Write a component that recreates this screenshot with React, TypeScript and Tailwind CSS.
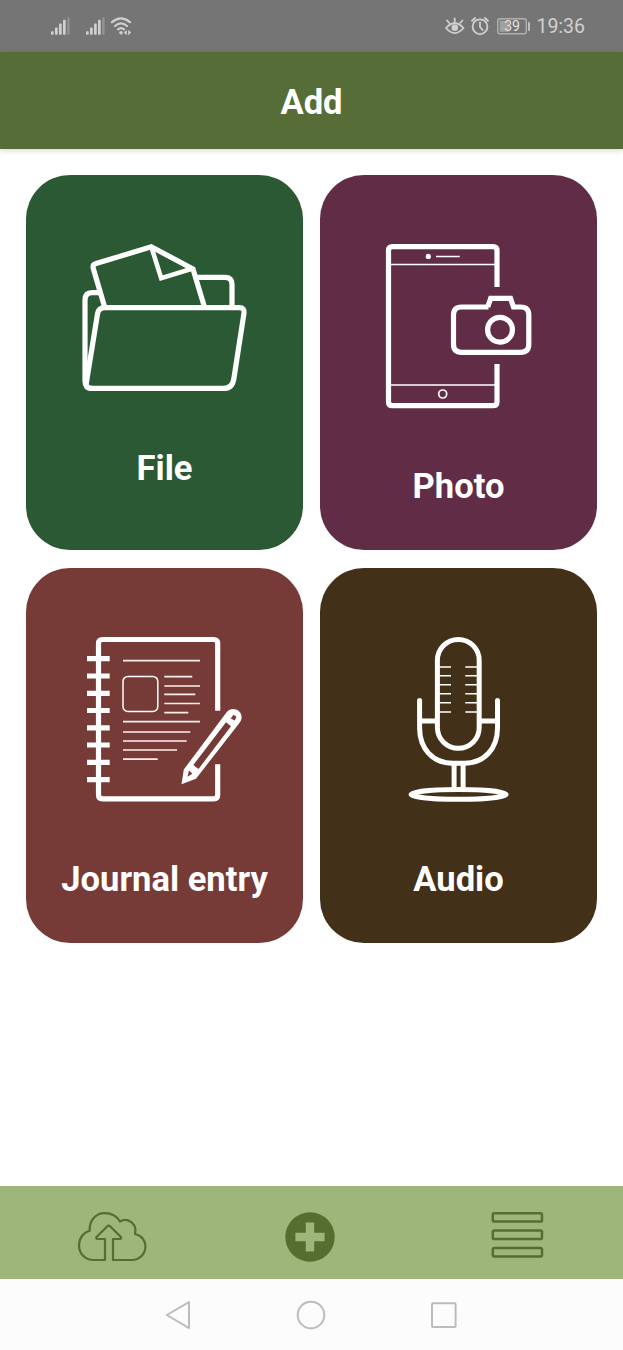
import type { ReactNode } from "react";

function Signal() {
  return (
    <svg className="h-5 w-5" viewBox="0 0 20 20" fill="#d0d0d0">
      <rect x="1" y="15.3" width="2.7" height="3.4" rx="0.8" />
      <rect x="5" y="11.5" width="2.7" height="7.2" rx="0.8" />
      <rect x="9" y="7.5" width="2.7" height="11.2" rx="0.8" />
      <rect x="13" y="3.8" width="2.7" height="14.9" rx="0.8" />
      <rect x="17.3" y="1.3" width="2.3" height="17.4" rx="0.8" fill="#949494" />
    </svg>
  );
}

function StatusBar() {
  return (
    <div className="flex h-[52px] items-center justify-between bg-[#757575] pr-[38px] pl-[50px]">
      <div className="flex items-center">
        <Signal />
        <div className="w-[15px]" />
        <Signal />
        <svg className="ml-1 h-5 w-6" viewBox="109 16 24 20" fill="none" stroke="#d0d0d0" strokeWidth="2.2" strokeLinecap="round">
          <path d="M112 22.2 Q121 14.5 130 22.2" />
          <path d="M115 26 Q121 20.8 127 26" />
          <path d="M118 29.4 Q121 26.9 124 29.4" />
          <circle cx="121" cy="32.7" r="1.8" fill="#d0d0d0" stroke="none" />
          <path d="M126.8 30 V35.2 L123.8 32.6Z M128.2 30 V35.2 L131.2 32.6Z" fill="#d0d0d0" stroke="none" />
        </svg>
      </div>
      <div className="flex items-center pt-[2px] text-[#d0d0d0]">
        <svg className="h-5 w-[86px]" viewBox="444 17 86 20" fill="none" stroke="#d0d0d0" strokeWidth="1.8" strokeLinecap="round">
          <path d="M446 28 Q454.7 18.5 463.5 28 Q454.7 38.2 446 28Z" />
          <circle cx="454.8" cy="27.7" r="3.3" fill="#d0d0d0" stroke="none" />
          <path d="M454.7 22 V18.5 M449.3 23 L447 20.5 M460.2 23 L462.5 20.5" />
          <circle cx="480" cy="26.7" r="7.4" />
          <path d="M480 22.3 V27 L482.7 30 M472 20.8 L475.2 18 M488 20.8 L484.8 18" />
          <rect x="497.7" y="18.7" width="28.6" height="15" rx="2.2" stroke="#b0b0b0" strokeWidth="1.4" />
          <rect x="499.6" y="20.6" width="9.5" height="11.2" fill="#a0a0a0" stroke="none" />
          <path d="M529 23 V30" stroke="#c8c8c8" strokeWidth="1.8" />
          <text x="512.1" y="31.1" textAnchor="middle" fontSize="14" fill="#e0e0e0" stroke="none">39</text>
        </svg>
        <span className="ml-[6px] text-[19.5px] leading-5">19:36</span>
      </div>
    </div>
  );
}

function FileIcon() {
  return (
    <svg className="h-[155px] w-[175px]" viewBox="77 240 175 155" fill="none" stroke="white" strokeWidth="5.2">
      <path d="M103 307.7 H239.5 Q244.8 307.7 244 313.2 L233.8 379 Q232.3 388.4 223.5 388.4 H91.5 Q85.6 388.4 86.3 383 L97.5 314 Q98.5 307.7 105 307.7" />
      <path d="M85 382 V300 Q85 292.6 92 292.6 H99.5 M85 381 Q85 388.4 92 388.4" />
      <path d="M197 277.3 H225 Q232 277.3 232 284.3 V307" />
      <path d="M104.5 306.5 L93.3 268.5 Q92.3 264.7 96 263.6 L151.3 246.8 L193 269 L204.3 306.5" />
      <path d="M151.3 246.8 L161.2 278.2 L192.7 268.5" strokeWidth="4.6" />
    </svg>
  );
}

function PhotoIcon() {
  return (
    <svg className="h-[173px] w-[155px]" viewBox="381 240 155 173" fill="none" stroke="white" strokeWidth="5.2">
      <path d="M497 287 V250.5 Q497 246.6 493 246.6 H392.5 Q388.5 246.6 388.5 250.5 V401.7 Q388.5 405.7 392.5 405.7 H493 Q497 405.7 497 401.7 V364" />
      <path d="M389 264.4 H496 M389 385.1 H496 M436 256.4 H459.7" strokeWidth="1.5" />
      <circle cx="428.3" cy="256.4" r="2.6" fill="white" stroke="none" />
      <circle cx="442.7" cy="394" r="4" strokeWidth="1.7" />
      <path d="M488.5 307 H461.5 Q453.5 307 453.5 315 V344.3 Q453.5 352.3 461.5 352.3 H520.8 Q528.8 352.3 528.8 344.3 V315 Q528.8 307 520.8 307 H513.5 L510.5 298.3 H490.7 L487.7 307" />
      <circle cx="500" cy="329.7" r="12.4" />
    </svg>
  );
}

function JournalIcon() {
  return (
    <svg className="h-[173px] w-[165px]" viewBox="82 633 165 173" fill="none" stroke="white" strokeWidth="5.2">
      <path d="M217.7 710.7 V643.5 Q217.7 639.5 213.7 639.5 H102.5 Q98.5 639.5 98.5 643.5 V794.8 Q98.5 798.8 102.5 798.8 H213.7 Q217.7 798.8 217.7 794.8 V764.3" />
      <path d="M87 658.7 H109.7 M87 676 H109.7 M87 693.3 H109.7 M87 710.5 H109.7 M87 727.8 H109.7 M87 745 H109.7 M87 762.3 H109.7 M87 779.6 H109.7" />
      <path d="M123 660.7 H200 M164.3 676.7 H192.3 M164.3 686 H200 M164.3 694.4 H195.3 M164.3 703.5 H200 M164.3 712.7 H188.3 M123 721.7 H200 M123 732 H190.3 M123 741 H186.7 M123 750 H177 M123 759.1 H157.7" strokeWidth="1.7" stroke="#fff0ed" />
      <rect x="123" y="676.4" width="34.8" height="35" rx="5" strokeWidth="1.5" />
      <path fill="white" stroke="none" fillRule="evenodd" d="M181.5 784.2 L183.8 769.5 L226.6 712.3 A8.3 8.3 0 0 1 240 722.2 L196 778.7Z M226 722.3 L231 726.2 L198.5 769 L193.3 765Z M189 770.5 L192.4 773.8 L187.5 776.8Z M233.5 714.7 L236.4 716.7 L234.8 720.5 L230.7 718.5Z" />
    </svg>
  );
}

function AudioIcon() {
  return (
    <svg className="h-[173px] w-[111px]" viewBox="403 633 111 173" fill="none" stroke="white" strokeWidth="5">
      <rect x="437.4" y="639.4" width="41.8" height="108.9" rx="20.9" />
      <path d="M439 667 H451 M439 675.7 H451 M439 684.7 H451 M439 693.8 H451 M439 702.8 H451 M439 712 H451 M465.3 667 H478 M465.3 675.7 H478 M465.3 684.7 H478 M465.3 693.8 H478 M465.3 702.8 H478 M465.3 712 H478" strokeWidth="1.5" />
      <path d="M419.6 700.4 V728 C419.6 749 433 763.3 453 763.3 H464 C484 763.3 497.5 749 497.5 728 V700.4" strokeLinecap="round" />
      <path d="M421 721 H437 M479 721 H496 M454.1 764 V789 M463.1 764 V789" />
      <ellipse cx="458.6" cy="794.4" rx="47.6" ry="4.9" />
    </svg>
  );
}

function Card({ color, label, children }: { color: string; label: string; children: ReactNode }) {
  return (
    <button className={`flex h-[375px] flex-col items-center rounded-[44px] ${color}`}>
      <span className="mt-[65px]">{children}</span>
      <span className="mt-[52px] text-[34.6px] leading-[42px] font-bold whitespace-nowrap text-white">{label}</span>
    </button>
  );
}

export default function App() {
  return (
    <div className="flex h-[1350px] w-[623px] flex-col overflow-hidden bg-white font-['Roboto',sans-serif]">
      <StatusBar />
      <header className="flex h-[97px] items-center justify-center bg-[#566d37] pt-[5px] text-[34.6px] font-bold text-white shadow-[0_2px_5px_rgba(0,0,0,0.14)]">
        Add
      </header>
      <main className="grid flex-1 grid-cols-2 content-start gap-x-[17px] gap-y-[18px] px-[26px] pt-[26px]">
        <Card color="bg-[#2a5934]" label="File"><FileIcon /></Card>
        <Card color="bg-[#612c46]" label="Photo"><PhotoIcon /></Card>
        <Card color="bg-[#763b36]" label="Journal entry"><JournalIcon /></Card>
        <Card color="bg-[#423018]" label="Audio"><AudioIcon /></Card>
      </main>
      <nav className="flex h-[93px] items-center justify-between bg-[#9eb679] pt-[8px] pr-[79px] pl-[76px]">
        <svg className="h-[54px] w-[72px]" viewBox="76 1210 72 54" fill="none" stroke="#556f2f" strokeWidth="2.2" strokeLinejoin="round">
          <path d="M105 1260 H94 C85 1260 79 1253.5 79 1245.5 C79 1238 83.5 1232.5 89.7 1230.8 C89 1220 96 1213.2 104.7 1213.2 C111.5 1213.2 117 1216.5 120 1221.5 C127.5 1217.3 137.5 1223 135 1234 C141.5 1235.2 145.4 1240.5 145.4 1246.5 C145.4 1254 139.5 1260 132 1260 H113 V1239 H119.5 Q122.5 1239 120.5 1236.5 L110.3 1226.5 Q108.7 1224.8 107.1 1226.5 L97 1236.5 Q95 1239 98 1239 H105Z" />
        </svg>
        <svg className="mr-[19px] h-[50px] w-[50px]" viewBox="0 0 50 50">
          <circle cx="25" cy="25" r="24.7" fill="#556f2f" />
          <path d="M25 10.4 V39.6 M10.4 25 H39.6" stroke="#9eb679" strokeWidth="8.4" />
        </svg>
        <svg className="h-[50px] w-[54px]" viewBox="490 1212 54 50" fill="none" stroke="#556f2f" strokeWidth="2.5">
          <rect x="492.8" y="1213.2" width="49.2" height="8.4" rx="1.6" />
          <rect x="492.8" y="1230.6" width="49.2" height="8.4" rx="1.6" />
          <rect x="492.8" y="1248" width="49.2" height="8.4" rx="1.6" />
        </svg>
      </nav>
      <div className="flex h-[71px] items-center justify-between bg-[#fcfcfc] pr-[165px] pl-[164px]">
        <svg className="h-[30px] w-[28px]" viewBox="164 1299.7 28 30" fill="none" stroke="#bcbcbc" strokeWidth="2" strokeLinejoin="round">
          <path d="M166.8 1314.7 L189 1301.8 V1327.8Z" />
        </svg>
        <svg className="h-[30px] w-[30px]" viewBox="0 0 30 30" fill="none" stroke="#bcbcbc" strokeWidth="2">
          <circle cx="15" cy="15" r="13.3" />
        </svg>
        <svg className="h-[30px] w-[28px]" viewBox="430 1299.7 28 30" fill="none" stroke="#bcbcbc" strokeWidth="2">
          <rect x="432" y="1303" width="23.6" height="23.6" rx="1" />
        </svg>
      </div>
    </div>
  );
}
